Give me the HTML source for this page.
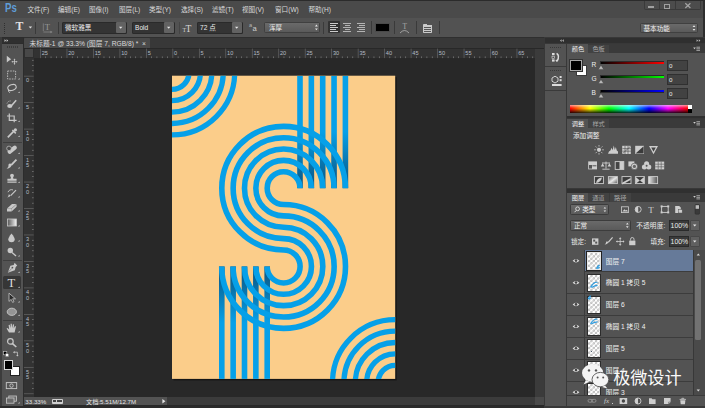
<!DOCTYPE html><html><head><meta charset="utf-8"><title>PS</title><style>
html,body{margin:0;padding:0;background:#282828;}
body{width:705px;height:408px;overflow:hidden;position:relative;font-family:"Liberation Sans","Noto Sans CJK SC",sans-serif;font-size:6.3px;color:#d8d8d8;line-height:1;}
.a{position:absolute;}
.t{position:absolute;white-space:nowrap;}
svg{position:absolute;left:0;top:0;overflow:visible}

</style></head><body>
<div class="a" style="left:0px;top:0px;width:705px;height:1px;background:#2b2b2b;"></div>
<div class="a" style="left:0px;top:1px;width:705px;height:16.5px;background:#4a4a4a;"></div>
<div class="a" style="left:0px;top:17.5px;width:705px;height:0.8px;background:#5c5c5c;"></div>
<div class="a" style="left:0px;top:18.3px;width:705px;height:18.5px;background:#525252;"></div>
<div class="a" style="left:0px;top:36.8px;width:705px;height:11.7px;background:#383838;"></div>
<div class="a" style="left:0px;top:36.8px;width:705px;height:0.9px;background:#2f2f2f;"></div>
<div class="a" style="left:0px;top:48.5px;width:705px;height:360px;background:#282828;"></div>
<div class="t" style="left:5px;top:2.3px;font-size:12.4px;color:#5f9dd8;font-weight:bold;transform:scaleX(0.78);transform-origin:0 0;">Ps</div>
<div class="t" style="left:27.5px;top:6.7px;font-size:6.6px;color:#dadada;">文件(F)</div>
<div class="t" style="left:58px;top:6.7px;font-size:6.6px;color:#dadada;">编辑(E)</div>
<div class="t" style="left:89px;top:6.7px;font-size:6.6px;color:#dadada;">图像(I)</div>
<div class="t" style="left:119px;top:6.7px;font-size:6.6px;color:#dadada;">图层(L)</div>
<div class="t" style="left:149px;top:6.7px;font-size:6.6px;color:#dadada;">类型(Y)</div>
<div class="t" style="left:181px;top:6.7px;font-size:6.6px;color:#dadada;">选择(S)</div>
<div class="t" style="left:212px;top:6.7px;font-size:6.6px;color:#dadada;">滤镜(T)</div>
<div class="t" style="left:242px;top:6.7px;font-size:6.6px;color:#dadada;">视图(V)</div>
<div class="t" style="left:275px;top:6.7px;font-size:6.6px;color:#dadada;">窗口(W)</div>
<div class="t" style="left:308.5px;top:6.7px;font-size:6.6px;color:#dadada;">帮助(H)</div>
<div class="a" style="left:643.7px;top:0px;width:57px;height:10.4px;background:#4c4c4c;border:0.7px solid #3a3a3a;border-top:none;box-sizing:border-box;border-radius:0 0 2px 2px;"></div>
<div class="a" style="left:659px;top:0.5px;width:0.7px;height:9.6px;background:#3a3a3a;"></div>
<div class="a" style="left:674.6px;top:0.5px;width:0.7px;height:9.6px;background:#3a3a3a;"></div>
<div class="a" style="left:648.4px;top:6.3px;width:5.6px;height:1.7px;background:#a0a0a0;"></div>
<div class="a" style="left:664.2px;top:4.3px;width:5.6px;height:4.3px;background:transparent;border:1px solid #a0a0a0;box-sizing:border-box;"></div>
<svg width="705" height="408"><path d="M685.3 3.3 L690.4 8 M690.4 3.3 L685.3 8" stroke="#a4a4a4" stroke-width="1.2" fill="none"/></svg>
<div class="a" style="left:703.4px;top:0px;width:1.6px;height:408px;background:#2e2e2e;"></div>
<div class="a" style="left:0px;top:0px;width:705px;height:0.9px;background:#2b2b2b;"></div>
<div class="a" style="left:4.2px;top:22.6px;width:1.1px;height:1.1px;background:#303030;"></div>
<div class="a" style="left:4.2px;top:24.6px;width:1.1px;height:1.1px;background:#303030;"></div>
<div class="a" style="left:4.2px;top:26.6px;width:1.1px;height:1.1px;background:#303030;"></div>
<div class="a" style="left:4.2px;top:28.6px;width:1.1px;height:1.1px;background:#303030;"></div>
<div class="a" style="left:4.2px;top:30.6px;width:1.1px;height:1.1px;background:#303030;"></div>
<div class="a" style="left:4.2px;top:32.6px;width:1.1px;height:1.1px;background:#303030;"></div>
<div class="t" style="left:15.4px;top:21.3px;font-size:11.8px;color:#e2e2e2;font-family:'Liberation Serif',serif;font-weight:bold;">T</div>
<svg width="705" height="408"><path d="M28.7 26.6 h3.4 l-1.7 2z" fill="#e0e0e0"/></svg>
<div class="a" style="left:35px;top:21.5px;width:0.7px;height:12.5px;background:#3a3a3a;"></div>
<div class="t" style="left:44.8px;top:22.8px;font-size:8.5px;color:#9a9a9a;font-family:'Liberation Serif',serif;">T</div>
<svg width="705" height="408"><path d="M43.3 23.4 v7.6 M43.3 32 h8" stroke="#8c8c8c" stroke-width="0.7" fill="none"/><path d="M50.5 30.8 l2 1.2 l-2 1.2z" fill="#8c8c8c"/></svg>
<div class="a" style="left:58.4px;top:21.5px;width:0.7px;height:12.5px;background:#3a3a3a;"></div>
<div class="a" style="left:62px;top:21.5px;width:64.5px;height:12px;background:#343434;border:0.6px solid #2a2a2a;box-sizing:border-box;border-radius:1px;"></div>
<div class="a" style="left:115.5px;top:22.1px;width:10.4px;height:10.8px;background:#626262;border-radius:1px;"></div>
<svg width="705" height="408"><path d="M119.0 26.7 h3.4 l-1.7 2z" fill="#e8e8e8"/></svg>
<div class="t" style="left:65px;top:24.65px;font-size:6.6px;color:#ececec;">微软雅黑</div>
<div class="a" style="left:132px;top:21.5px;width:42.5px;height:12px;background:#343434;border:0.6px solid #2a2a2a;box-sizing:border-box;border-radius:1px;"></div>
<div class="a" style="left:163.5px;top:22.1px;width:10.4px;height:10.8px;background:#626262;border-radius:1px;"></div>
<svg width="705" height="408"><path d="M167.0 26.7 h3.4 l-1.7 2z" fill="#e8e8e8"/></svg>
<div class="t" style="left:135px;top:24.65px;font-size:6.6px;color:#ececec;">Bold</div>
<div class="t" style="left:182.6px;top:27.2px;font-size:6px;color:#d4d4d4;font-family:'Liberation Serif',serif;">T</div>
<div class="t" style="left:185.6px;top:23.6px;font-size:9.6px;color:#d4d4d4;font-family:'Liberation Serif',serif;">T</div>
<div class="a" style="left:197px;top:21.5px;width:45.5px;height:12px;background:#343434;border:0.6px solid #2a2a2a;box-sizing:border-box;border-radius:1px;"></div>
<div class="a" style="left:231.5px;top:22.1px;width:10.4px;height:10.8px;background:#626262;border-radius:1px;"></div>
<svg width="705" height="408"><path d="M235.0 26.7 h3.4 l-1.7 2z" fill="#e8e8e8"/></svg>
<div class="t" style="left:200px;top:24.65px;font-size:6.6px;color:#ececec;">72 点</div>
<div class="t" style="left:249px;top:23.2px;font-size:5.6px;color:#b8b8b8;">a</div>
<div class="t" style="left:252.6px;top:24.6px;font-size:7.6px;color:#d0d0d0;">a</div>
<div class="a" style="left:264px;top:21.8px;width:55.8px;height:11.4px;background:linear-gradient(#6a6a6a,#5a5a5a);border:0.5px solid #404040;box-sizing:border-box;border-radius:1.5px;"></div>
<div class="t" style="left:269px;top:24.9px;font-size:6.6px;color:#f0f0f0;">浑厚</div>
<svg width="705" height="408"><path d="M315 26.4 l1.4 -1.8 l1.4 1.8z M315 28.4 l1.4 1.8 l1.4 -1.8z" fill="#e8e8e8"/></svg>
<div class="a" style="left:323.4px;top:21.5px;width:0.7px;height:12.5px;background:#3a3a3a;"></div>
<div class="a" style="left:178.5px;top:21.5px;width:0.7px;height:12.5px;background:#444;"></div>
<div class="a" style="left:328px;top:21.3px;width:11.8px;height:12px;background:#333;border-radius:1px;"></div>
<div class="a" style="left:330px;top:23.0px;width:8px;height:0.9px;background:#cccccc;"></div>
<div class="a" style="left:330px;top:25.05px;width:5.5px;height:0.9px;background:#cccccc;"></div>
<div class="a" style="left:330px;top:27.1px;width:8px;height:0.9px;background:#cccccc;"></div>
<div class="a" style="left:330px;top:29.15px;width:5.5px;height:0.9px;background:#cccccc;"></div>
<div class="a" style="left:330px;top:31.2px;width:8px;height:0.9px;background:#cccccc;"></div>
<div class="a" style="left:343.4px;top:23.0px;width:8px;height:0.9px;background:#b4b4b4;"></div>
<div class="a" style="left:344.65px;top:25.05px;width:5.5px;height:0.9px;background:#b4b4b4;"></div>
<div class="a" style="left:343.4px;top:27.1px;width:8px;height:0.9px;background:#b4b4b4;"></div>
<div class="a" style="left:344.65px;top:29.15px;width:5.5px;height:0.9px;background:#b4b4b4;"></div>
<div class="a" style="left:343.4px;top:31.2px;width:8px;height:0.9px;background:#b4b4b4;"></div>
<div class="a" style="left:356.8px;top:23.0px;width:8px;height:0.9px;background:#b4b4b4;"></div>
<div class="a" style="left:359.3px;top:25.05px;width:5.5px;height:0.9px;background:#b4b4b4;"></div>
<div class="a" style="left:356.8px;top:27.1px;width:8px;height:0.9px;background:#b4b4b4;"></div>
<div class="a" style="left:359.3px;top:29.15px;width:5.5px;height:0.9px;background:#b4b4b4;"></div>
<div class="a" style="left:356.8px;top:31.2px;width:8px;height:0.9px;background:#b4b4b4;"></div>
<div class="a" style="left:371px;top:21px;width:0.7px;height:12.5px;background:#3a3a3a;"></div>
<div class="a" style="left:375px;top:23px;width:14.6px;height:9.2px;background:#000;border:0.5px solid #4a4a4a;box-sizing:border-box;"></div>
<div class="a" style="left:393.5px;top:21px;width:0.7px;height:12.5px;background:#3a3a3a;"></div>
<div class="t" style="left:402.4px;top:23.2px;font-size:7.4px;color:#a8a8a8;font-family:'Liberation Serif',serif;">T</div>
<svg width="705" height="408"><path d="M400 33 q4.5 -5 9 0" stroke="#a8a8a8" stroke-width="0.9" fill="none"/></svg>
<div class="a" style="left:416px;top:21px;width:0.7px;height:12.5px;background:#3a3a3a;"></div>
<div class="a" style="left:422.8px;top:23.6px;width:9.6px;height:9px;background:#cacaca;border-radius:0.8px;"></div>
<div class="a" style="left:427.4px;top:23.6px;width:5px;height:1.8px;background:#525252;"></div>
<div class="a" style="left:424px;top:27px;width:7px;height:1px;background:#555;"></div>
<div class="a" style="left:424px;top:29px;width:7px;height:1px;background:#555;"></div>
<div class="a" style="left:424px;top:30.8px;width:7px;height:0.8px;background:#555;"></div>
<div class="a" style="left:439.3px;top:21px;width:0.7px;height:12.5px;background:#3a3a3a;"></div>
<div class="a" style="left:639.8px;top:22.8px;width:58.4px;height:10.6px;background:linear-gradient(#6a6a6a,#5a5a5a);border:0.5px solid #404040;box-sizing:border-box;border-radius:1.5px;"></div>
<div class="t" style="left:643.5px;top:25.6px;font-size:6.6px;color:#f0f0f0;">基本功能</div>
<svg width="705" height="408"><path d="M692.6 27 l1.4 -1.8 l1.4 1.8z M692.6 29 l1.4 1.8 l1.4 -1.8z" fill="#e8e8e8"/></svg>
<div class="a" style="left:0px;top:36.8px;width:24.3px;height:372px;background:#2c2c2c;"></div>
<div class="a" style="left:0px;top:36.8px;width:1.8px;height:372px;background:#3c3c3c;"></div>
<div class="a" style="left:1.8px;top:37.6px;width:20.8px;height:5.8px;background:#2f2f2f;"></div>
<svg width="705" height="408"><path d="M4.5 39.3 l1.6 1.3 l-1.6 1.3z M6.6 39.3 l1.6 1.3 l-1.6 1.3z" fill="#cfcfcf"/></svg>
<div class="a" style="left:1.8px;top:43.6px;width:20.8px;height:364.4px;background:#535353;"></div>
<div class="a" style="left:6.6px;top:46.4px;width:1.4px;height:1.2px;background:#3c3c3c;"></div>
<div class="a" style="left:8.6px;top:46.4px;width:1.4px;height:1.2px;background:#3c3c3c;"></div>
<div class="a" style="left:10.6px;top:46.4px;width:1.4px;height:1.2px;background:#3c3c3c;"></div>
<div class="a" style="left:12.6px;top:46.4px;width:1.4px;height:1.2px;background:#3c3c3c;"></div>
<div class="a" style="left:14.6px;top:46.4px;width:1.4px;height:1.2px;background:#3c3c3c;"></div>
<div class="a" style="left:16.6px;top:46.4px;width:1.4px;height:1.2px;background:#3c3c3c;"></div>
<div class="a" style="left:3px;top:142.3px;width:18.5px;height:0.7px;background:#3e3e3e;"></div>
<div class="a" style="left:3px;top:259.5px;width:18.5px;height:0.7px;background:#3e3e3e;"></div>
<div class="a" style="left:3px;top:320px;width:18.5px;height:0.7px;background:#3e3e3e;"></div>
<div class="a" style="left:3px;top:276px;width:17.6px;height:13.4px;background:#363636;border-radius:1.5px;"></div>
<svg width="705" height="408" fill="none" stroke="none"><path d="M6.8 55.8 v6.8 l1.8-1.6 l2.6-1.8z" fill="#c8c8c8"/><path d="M14.5 59.2 v5 M12 61.7 h5" stroke="#c8c8c8" stroke-width="0.8"/><path d="M14.5 58.6 l1 1.2 h-2z M14.5 64.8 l1 -1.2 h-2z M11.4 61.7 l1.2 -1 v2z M17.6 61.7 l-1.2 -1 v2z" fill="#c8c8c8"/><rect x="7.6" y="71" width="8" height="8" stroke="#b4b4b4" stroke-width="1" stroke-dasharray="1.6 1"/><ellipse cx="12" cy="87.5" rx="4.3" ry="2.8" stroke="#c8c8c8" stroke-width="1.1" transform="rotate(-18 12 87.5)"/><path d="M8.5 89.5 q-0.5 2 1.2 3.2" stroke="#c8c8c8" stroke-width="1"/><path d="M16.2 100.3 l-5 5.6" stroke="#c8c8c8" stroke-width="1.5"/><ellipse cx="9.8" cy="106" rx="2.6" ry="2" fill="#c8c8c8"/><path d="M7 103.5 a3.5 3.5 0 0 1 4-2.5" stroke="#c8c8c8" stroke-width="0.8" stroke-dasharray="1 0.8"/><path d="M9.3 113.6 v6.8 h7.3 M7 116 h7.2 v6.2" stroke="#c8c8c8" stroke-width="1.2"/><path d="M14 131 l-5 5.2 l-1.2 1.2" stroke="#c8c8c8" stroke-width="1.7"/><path d="M12.4 130 l3.4 3.4" stroke="#c8c8c8" stroke-width="1.5"/><circle cx="15.4" cy="129.8" r="1.6" fill="#c8c8c8"/><rect x="6.9" y="147.6" width="10.6" height="4.2" rx="2" fill="#c8c8c8" transform="rotate(-38 12.2 149.7)"/><circle cx="9" cy="148.4" r="2.3" fill="#4a4a4a" stroke="#c8c8c8" stroke-width="0.7"/><path d="M16.4 159.6 l-5.2 5.6" stroke="#c8c8c8" stroke-width="1.8"/><path d="M11.6 164.6 q0 3.6 -5 4.2 q2.4 -1.6 2 -4.6 q1.6 -1.4 3 0.4z" fill="#c8c8c8"/><circle cx="12" cy="175.6" r="1.9" fill="#c8c8c8"/><path d="M11.1 176.6 h1.8 l0.5 2.2 h3.2 v2 h-9.2 v-2 h3.2z M7.4 181.6 h9.2 v1.2 h-9.2z" fill="#c8c8c8"/><path d="M16 190.2 l-5.3 5.4" stroke="#c8c8c8" stroke-width="1.2"/><path d="M10.6 195 q-0.4 2.4 -3.4 2.6 q1.8 -1 1.4 -3z" fill="#c8c8c8"/><path d="M8 192.2 a3.6 3.6 0 0 1 5-2.2" stroke="#c8c8c8" stroke-width="0.9"/><path d="M7 208.6 l5 -4.6 h4.4 l-5 4.6z M7 208.8 h4.4 v2.6 h-4.4z M11.6 208.8 l5 -4.6 v2.6 l-5 4.6z" fill="#c8c8c8"/><defs><linearGradient id="tg" x1="0" x2="1"><stop offset="0" stop-color="#555"/><stop offset="1" stop-color="#f2f2f2"/></linearGradient></defs><rect x="7.4" y="219" width="9" height="7" fill="url(#tg)" stroke="#c8c8c8" stroke-width="0.8"/><path d="M11.5 233.6 q3.2 4 3.2 5.6 a3.2 3 0 0 1 -6.4 0 q0 -1.6 3.2 -5.6z" fill="#c8c8c8"/><circle cx="10.3" cy="250.5" r="2.7" fill="#c8c8c8"/><path d="M12 252.4 l4 3.6" stroke="#c8c8c8" stroke-width="1.3"/><path d="M14.6 262.8 l2.6 2.6 l-1.5 1.5 l-0.9 3.3 l-7 2.6 l2.6 -7 l3.3 -0.9z" fill="#c8c8c8"/><circle cx="12.4" cy="267.6" r="0.9" fill="#535353"/><path d="M8 272.4 l3.8 -4" stroke="#535353" stroke-width="0.5"/><path d="M9 293.2 v8.2 l2.2 -2 l1.4 3 l1.4 -0.7 l-1.4 -2.9 h2.9z" fill="#2a2a2a" stroke="#c8c8c8" stroke-width="0.8"/><ellipse cx="11.8" cy="311.8" rx="4.6" ry="3.6" fill="#959595" stroke="#c8c8c8" stroke-width="0.9"/><path d="M9 332.6 l-2.4 -4 l1 -0.7 l1.6 1.6 l-0.6 -4.6 l1.1 -0.2 l0.9 3.4 l0 -4.4 h1.2 l0.3 4.3 l0.9 -3.8 l1.1 0.2 l-0.4 4.2 l1.3 -2.6 l1 0.4 l-1.4 6.2z" fill="#c8c8c8"/><circle cx="10.4" cy="341.4" r="2.8" stroke="#c8c8c8" stroke-width="1.2"/><path d="M12.5 343.6 l3.8 3.4" stroke="#c8c8c8" stroke-width="1.6"/><rect x="3.4" y="351.4" width="3.4" height="3.4" fill="#000" stroke="#c8c8c8" stroke-width="0.6"/><rect x="5.4" y="353.4" width="3.4" height="3.4" fill="#fff" stroke="#222" stroke-width="0.4"/><path d="M14 352.2 h3.4 v3.4" stroke="#c8c8c8" stroke-width="0.8"/><path d="M14.6 351 l-1.6 1.2 l1.6 1.2z M16.2 355 l1.2 1.6 l1.2 -1.6z" fill="#c8c8c8"/><rect x="6.3" y="382.6" width="10.4" height="6" stroke="#c8c8c8" stroke-width="0.9"/><circle cx="11.5" cy="385.6" r="1.7" stroke="#c8c8c8" stroke-width="0.9"/><rect x="8.8" y="396" width="7.6" height="5.2" fill="#6a6a6a" stroke="#c8c8c8" stroke-width="0.8"/><rect x="6.4" y="398" width="7.6" height="5.2" fill="#6a6a6a" stroke="#c8c8c8" stroke-width="0.8"/><path d="M19.6 77.9 v1.6 h-1.6z" fill="#cfcfcf"/><path d="M19.6 91.4 v1.6 h-1.6z" fill="#cfcfcf"/><path d="M19.6 106.9 v1.6 h-1.6z" fill="#cfcfcf"/><path d="M19.6 120.4 v1.6 h-1.6z" fill="#cfcfcf"/><path d="M19.6 135.4 v1.6 h-1.6z" fill="#cfcfcf"/><path d="M19.6 152.4 v1.6 h-1.6z" fill="#cfcfcf"/><path d="M19.6 166.9 v1.6 h-1.6z" fill="#cfcfcf"/><path d="M19.6 181.4 v1.6 h-1.6z" fill="#cfcfcf"/><path d="M19.6 195.9 v1.6 h-1.6z" fill="#cfcfcf"/><path d="M19.6 209.9 v1.6 h-1.6z" fill="#cfcfcf"/><path d="M19.6 224.9 v1.6 h-1.6z" fill="#cfcfcf"/><path d="M19.6 239.9 v1.6 h-1.6z" fill="#cfcfcf"/><path d="M19.6 254.9 v1.6 h-1.6z" fill="#cfcfcf"/><path d="M19.6 271.4 v1.6 h-1.6z" fill="#cfcfcf"/><path d="M19.6 286.4 v1.6 h-1.6z" fill="#cfcfcf"/><path d="M19.6 300.9 v1.6 h-1.6z" fill="#cfcfcf"/><path d="M19.6 314.4 v1.6 h-1.6z" fill="#cfcfcf"/><path d="M19.6 330.9 v1.6 h-1.6z" fill="#cfcfcf"/><path d="M19.6 401.9 v1.6 h-1.6z" fill="#cfcfcf"/></svg>
<div class="t" style="left:7.4px;top:276.6px;font-size:12.6px;color:#dedede;font-family:'Liberation Serif',serif;">T</div>
<div class="a" style="left:9.8px;top:366.4px;width:9.8px;height:9.8px;background:#fff;border:0.5px solid #222;box-sizing:border-box;"></div>
<div class="a" style="left:3.7px;top:360.3px;width:9.8px;height:9.6px;background:#000;border:0.6px solid #d8d8d8;box-sizing:border-box;"></div>
<div class="a" style="left:24.2px;top:38px;width:126px;height:10.4px;background:#4a4a4a;border-radius:1px 1px 0 0;"></div>
<div class="t" style="left:29.6px;top:40.6px;font-size:6.68px;color:#dadada;">未标题-1 @ 33.3% (图层 7, RGB/8) * &nbsp;×</div>
<div class="a" style="left:24px;top:48.5px;width:511px;height:9.6px;background:#323232;"></div>
<div class="a" style="left:24px;top:58.1px;width:9.7px;height:339.1px;background:#323232;"></div>
<div class="a" style="left:24px;top:48.5px;width:9.7px;height:9.6px;background:#2e2e2e;"></div>
<div class="a" style="left:24.5px;top:49.3px;width:8.4px;height:8px;background:#484848;"></div>
<svg width="705" height="408"><rect x="40.15" y="48.6" width="0.7" height="9.5" fill="#666"/><rect x="45.44" y="56.4" width="0.6" height="1.7" fill="#8a8a8a"/><rect x="50.74" y="56.4" width="0.6" height="1.7" fill="#8a8a8a"/><rect x="56.03" y="56.4" width="0.6" height="1.7" fill="#8a8a8a"/><rect x="61.33" y="56.4" width="0.6" height="1.7" fill="#8a8a8a"/><rect x="66.62" y="48.6" width="0.7" height="9.5" fill="#666"/><rect x="71.91" y="56.4" width="0.6" height="1.7" fill="#8a8a8a"/><rect x="77.21" y="56.4" width="0.6" height="1.7" fill="#8a8a8a"/><rect x="82.50" y="56.4" width="0.6" height="1.7" fill="#8a8a8a"/><rect x="87.80" y="56.4" width="0.6" height="1.7" fill="#8a8a8a"/><rect x="93.09" y="48.6" width="0.7" height="9.5" fill="#666"/><rect x="98.38" y="56.4" width="0.6" height="1.7" fill="#8a8a8a"/><rect x="103.68" y="56.4" width="0.6" height="1.7" fill="#8a8a8a"/><rect x="108.97" y="56.4" width="0.6" height="1.7" fill="#8a8a8a"/><rect x="114.27" y="56.4" width="0.6" height="1.7" fill="#8a8a8a"/><rect x="119.56" y="48.6" width="0.7" height="9.5" fill="#666"/><rect x="124.85" y="56.4" width="0.6" height="1.7" fill="#8a8a8a"/><rect x="130.15" y="56.4" width="0.6" height="1.7" fill="#8a8a8a"/><rect x="135.44" y="56.4" width="0.6" height="1.7" fill="#8a8a8a"/><rect x="140.74" y="56.4" width="0.6" height="1.7" fill="#8a8a8a"/><rect x="146.03" y="48.6" width="0.7" height="9.5" fill="#666"/><rect x="151.32" y="56.4" width="0.6" height="1.7" fill="#8a8a8a"/><rect x="156.62" y="56.4" width="0.6" height="1.7" fill="#8a8a8a"/><rect x="161.91" y="56.4" width="0.6" height="1.7" fill="#8a8a8a"/><rect x="167.21" y="56.4" width="0.6" height="1.7" fill="#8a8a8a"/><rect x="172.50" y="48.6" width="0.7" height="9.5" fill="#666"/><rect x="177.79" y="56.4" width="0.6" height="1.7" fill="#8a8a8a"/><rect x="183.09" y="56.4" width="0.6" height="1.7" fill="#8a8a8a"/><rect x="188.38" y="56.4" width="0.6" height="1.7" fill="#8a8a8a"/><rect x="193.68" y="56.4" width="0.6" height="1.7" fill="#8a8a8a"/><rect x="198.97" y="48.6" width="0.7" height="9.5" fill="#666"/><rect x="204.26" y="56.4" width="0.6" height="1.7" fill="#8a8a8a"/><rect x="209.56" y="56.4" width="0.6" height="1.7" fill="#8a8a8a"/><rect x="214.85" y="56.4" width="0.6" height="1.7" fill="#8a8a8a"/><rect x="220.15" y="56.4" width="0.6" height="1.7" fill="#8a8a8a"/><rect x="225.44" y="48.6" width="0.7" height="9.5" fill="#666"/><rect x="230.73" y="56.4" width="0.6" height="1.7" fill="#8a8a8a"/><rect x="236.03" y="56.4" width="0.6" height="1.7" fill="#8a8a8a"/><rect x="241.32" y="56.4" width="0.6" height="1.7" fill="#8a8a8a"/><rect x="246.62" y="56.4" width="0.6" height="1.7" fill="#8a8a8a"/><rect x="251.91" y="48.6" width="0.7" height="9.5" fill="#666"/><rect x="257.20" y="56.4" width="0.6" height="1.7" fill="#8a8a8a"/><rect x="262.50" y="56.4" width="0.6" height="1.7" fill="#8a8a8a"/><rect x="267.79" y="56.4" width="0.6" height="1.7" fill="#8a8a8a"/><rect x="273.09" y="56.4" width="0.6" height="1.7" fill="#8a8a8a"/><rect x="278.38" y="48.6" width="0.7" height="9.5" fill="#666"/><rect x="283.67" y="56.4" width="0.6" height="1.7" fill="#8a8a8a"/><rect x="288.97" y="56.4" width="0.6" height="1.7" fill="#8a8a8a"/><rect x="294.26" y="56.4" width="0.6" height="1.7" fill="#8a8a8a"/><rect x="299.56" y="56.4" width="0.6" height="1.7" fill="#8a8a8a"/><rect x="304.85" y="48.6" width="0.7" height="9.5" fill="#666"/><rect x="310.14" y="56.4" width="0.6" height="1.7" fill="#8a8a8a"/><rect x="315.44" y="56.4" width="0.6" height="1.7" fill="#8a8a8a"/><rect x="320.73" y="56.4" width="0.6" height="1.7" fill="#8a8a8a"/><rect x="326.03" y="56.4" width="0.6" height="1.7" fill="#8a8a8a"/><rect x="331.32" y="48.6" width="0.7" height="9.5" fill="#666"/><rect x="336.61" y="56.4" width="0.6" height="1.7" fill="#8a8a8a"/><rect x="341.91" y="56.4" width="0.6" height="1.7" fill="#8a8a8a"/><rect x="347.20" y="56.4" width="0.6" height="1.7" fill="#8a8a8a"/><rect x="352.50" y="56.4" width="0.6" height="1.7" fill="#8a8a8a"/><rect x="357.79" y="48.6" width="0.7" height="9.5" fill="#666"/><rect x="363.08" y="56.4" width="0.6" height="1.7" fill="#8a8a8a"/><rect x="368.38" y="56.4" width="0.6" height="1.7" fill="#8a8a8a"/><rect x="373.67" y="56.4" width="0.6" height="1.7" fill="#8a8a8a"/><rect x="378.97" y="56.4" width="0.6" height="1.7" fill="#8a8a8a"/><rect x="384.26" y="48.6" width="0.7" height="9.5" fill="#666"/><rect x="389.55" y="56.4" width="0.6" height="1.7" fill="#8a8a8a"/><rect x="394.85" y="56.4" width="0.6" height="1.7" fill="#8a8a8a"/><rect x="400.14" y="56.4" width="0.6" height="1.7" fill="#8a8a8a"/><rect x="405.44" y="56.4" width="0.6" height="1.7" fill="#8a8a8a"/><rect x="410.73" y="48.6" width="0.7" height="9.5" fill="#666"/><rect x="416.02" y="56.4" width="0.6" height="1.7" fill="#8a8a8a"/><rect x="421.32" y="56.4" width="0.6" height="1.7" fill="#8a8a8a"/><rect x="426.61" y="56.4" width="0.6" height="1.7" fill="#8a8a8a"/><rect x="431.91" y="56.4" width="0.6" height="1.7" fill="#8a8a8a"/><rect x="437.20" y="48.6" width="0.7" height="9.5" fill="#666"/><rect x="442.49" y="56.4" width="0.6" height="1.7" fill="#8a8a8a"/><rect x="447.79" y="56.4" width="0.6" height="1.7" fill="#8a8a8a"/><rect x="453.08" y="56.4" width="0.6" height="1.7" fill="#8a8a8a"/><rect x="458.38" y="56.4" width="0.6" height="1.7" fill="#8a8a8a"/><rect x="463.67" y="48.6" width="0.7" height="9.5" fill="#666"/><rect x="468.96" y="56.4" width="0.6" height="1.7" fill="#8a8a8a"/><rect x="474.26" y="56.4" width="0.6" height="1.7" fill="#8a8a8a"/><rect x="479.55" y="56.4" width="0.6" height="1.7" fill="#8a8a8a"/><rect x="484.85" y="56.4" width="0.6" height="1.7" fill="#8a8a8a"/><rect x="490.14" y="48.6" width="0.7" height="9.5" fill="#666"/><rect x="495.43" y="56.4" width="0.6" height="1.7" fill="#8a8a8a"/><rect x="500.73" y="56.4" width="0.6" height="1.7" fill="#8a8a8a"/><rect x="506.02" y="56.4" width="0.6" height="1.7" fill="#8a8a8a"/><rect x="511.32" y="56.4" width="0.6" height="1.7" fill="#8a8a8a"/><rect x="516.61" y="48.6" width="0.7" height="9.5" fill="#666"/><rect x="521.90" y="56.4" width="0.6" height="1.7" fill="#8a8a8a"/><rect x="527.20" y="56.4" width="0.6" height="1.7" fill="#8a8a8a"/><rect x="532.49" y="56.4" width="0.6" height="1.7" fill="#8a8a8a"/><rect x="32" y="59.92" width="1.7" height="0.6" fill="#8a8a8a"/><rect x="32" y="65.21" width="1.7" height="0.6" fill="#8a8a8a"/><rect x="32" y="70.51" width="1.7" height="0.6" fill="#8a8a8a"/><rect x="24" y="75.80" width="9.7" height="0.7" fill="#666"/><rect x="32" y="81.09" width="1.7" height="0.6" fill="#8a8a8a"/><rect x="32" y="86.39" width="1.7" height="0.6" fill="#8a8a8a"/><rect x="32" y="91.68" width="1.7" height="0.6" fill="#8a8a8a"/><rect x="32" y="96.98" width="1.7" height="0.6" fill="#8a8a8a"/><rect x="24" y="102.27" width="9.7" height="0.7" fill="#666"/><rect x="32" y="107.56" width="1.7" height="0.6" fill="#8a8a8a"/><rect x="32" y="112.86" width="1.7" height="0.6" fill="#8a8a8a"/><rect x="32" y="118.15" width="1.7" height="0.6" fill="#8a8a8a"/><rect x="32" y="123.45" width="1.7" height="0.6" fill="#8a8a8a"/><rect x="24" y="128.74" width="9.7" height="0.7" fill="#666"/><rect x="32" y="134.03" width="1.7" height="0.6" fill="#8a8a8a"/><rect x="32" y="139.33" width="1.7" height="0.6" fill="#8a8a8a"/><rect x="32" y="144.62" width="1.7" height="0.6" fill="#8a8a8a"/><rect x="32" y="149.92" width="1.7" height="0.6" fill="#8a8a8a"/><rect x="24" y="155.21" width="9.7" height="0.7" fill="#666"/><rect x="32" y="160.50" width="1.7" height="0.6" fill="#8a8a8a"/><rect x="32" y="165.80" width="1.7" height="0.6" fill="#8a8a8a"/><rect x="32" y="171.09" width="1.7" height="0.6" fill="#8a8a8a"/><rect x="32" y="176.39" width="1.7" height="0.6" fill="#8a8a8a"/><rect x="24" y="181.68" width="9.7" height="0.7" fill="#666"/><rect x="32" y="186.97" width="1.7" height="0.6" fill="#8a8a8a"/><rect x="32" y="192.27" width="1.7" height="0.6" fill="#8a8a8a"/><rect x="32" y="197.56" width="1.7" height="0.6" fill="#8a8a8a"/><rect x="32" y="202.86" width="1.7" height="0.6" fill="#8a8a8a"/><rect x="24" y="208.15" width="9.7" height="0.7" fill="#666"/><rect x="32" y="213.44" width="1.7" height="0.6" fill="#8a8a8a"/><rect x="32" y="218.74" width="1.7" height="0.6" fill="#8a8a8a"/><rect x="32" y="224.03" width="1.7" height="0.6" fill="#8a8a8a"/><rect x="32" y="229.33" width="1.7" height="0.6" fill="#8a8a8a"/><rect x="24" y="234.62" width="9.7" height="0.7" fill="#666"/><rect x="32" y="239.91" width="1.7" height="0.6" fill="#8a8a8a"/><rect x="32" y="245.21" width="1.7" height="0.6" fill="#8a8a8a"/><rect x="32" y="250.50" width="1.7" height="0.6" fill="#8a8a8a"/><rect x="32" y="255.80" width="1.7" height="0.6" fill="#8a8a8a"/><rect x="24" y="261.09" width="9.7" height="0.7" fill="#666"/><rect x="32" y="266.38" width="1.7" height="0.6" fill="#8a8a8a"/><rect x="32" y="271.68" width="1.7" height="0.6" fill="#8a8a8a"/><rect x="32" y="276.97" width="1.7" height="0.6" fill="#8a8a8a"/><rect x="32" y="282.27" width="1.7" height="0.6" fill="#8a8a8a"/><rect x="24" y="287.56" width="9.7" height="0.7" fill="#666"/><rect x="32" y="292.85" width="1.7" height="0.6" fill="#8a8a8a"/><rect x="32" y="298.15" width="1.7" height="0.6" fill="#8a8a8a"/><rect x="32" y="303.44" width="1.7" height="0.6" fill="#8a8a8a"/><rect x="32" y="308.74" width="1.7" height="0.6" fill="#8a8a8a"/><rect x="24" y="314.03" width="9.7" height="0.7" fill="#666"/><rect x="32" y="319.32" width="1.7" height="0.6" fill="#8a8a8a"/><rect x="32" y="324.62" width="1.7" height="0.6" fill="#8a8a8a"/><rect x="32" y="329.91" width="1.7" height="0.6" fill="#8a8a8a"/><rect x="32" y="335.21" width="1.7" height="0.6" fill="#8a8a8a"/><rect x="24" y="340.50" width="9.7" height="0.7" fill="#666"/><rect x="32" y="345.79" width="1.7" height="0.6" fill="#8a8a8a"/><rect x="32" y="351.09" width="1.7" height="0.6" fill="#8a8a8a"/><rect x="32" y="356.38" width="1.7" height="0.6" fill="#8a8a8a"/><rect x="32" y="361.68" width="1.7" height="0.6" fill="#8a8a8a"/><rect x="24" y="366.97" width="9.7" height="0.7" fill="#666"/><rect x="32" y="372.26" width="1.7" height="0.6" fill="#8a8a8a"/><rect x="32" y="377.56" width="1.7" height="0.6" fill="#8a8a8a"/><rect x="32" y="382.85" width="1.7" height="0.6" fill="#8a8a8a"/><rect x="32" y="388.15" width="1.7" height="0.6" fill="#8a8a8a"/><rect x="24" y="393.44" width="9.7" height="0.7" fill="#666"/></svg>
<div class="t" style="left:41.75000000000001px;top:50.5px;font-size:5.6px;color:#b4bcc6;">25</div>
<div class="t" style="left:68.22px;top:50.5px;font-size:5.6px;color:#b4bcc6;">20</div>
<div class="t" style="left:94.69px;top:50.5px;font-size:5.6px;color:#b4bcc6;">15</div>
<div class="t" style="left:121.16px;top:50.5px;font-size:5.6px;color:#b4bcc6;">10</div>
<div class="t" style="left:147.63px;top:50.5px;font-size:5.6px;color:#b4bcc6;">5</div>
<div class="t" style="left:174.1px;top:50.5px;font-size:5.6px;color:#b4bcc6;">0</div>
<div class="t" style="left:200.57px;top:50.5px;font-size:5.6px;color:#b4bcc6;">5</div>
<div class="t" style="left:227.04px;top:50.5px;font-size:5.6px;color:#b4bcc6;">10</div>
<div class="t" style="left:253.51px;top:50.5px;font-size:5.6px;color:#b4bcc6;">15</div>
<div class="t" style="left:279.98px;top:50.5px;font-size:5.6px;color:#b4bcc6;">20</div>
<div class="t" style="left:306.45000000000005px;top:50.5px;font-size:5.6px;color:#b4bcc6;">25</div>
<div class="t" style="left:332.92px;top:50.5px;font-size:5.6px;color:#b4bcc6;">30</div>
<div class="t" style="left:359.39px;top:50.5px;font-size:5.6px;color:#b4bcc6;">35</div>
<div class="t" style="left:385.86px;top:50.5px;font-size:5.6px;color:#b4bcc6;">40</div>
<div class="t" style="left:412.33000000000004px;top:50.5px;font-size:5.6px;color:#b4bcc6;">45</div>
<div class="t" style="left:438.8px;top:50.5px;font-size:5.6px;color:#b4bcc6;">50</div>
<div class="t" style="left:465.27px;top:50.5px;font-size:5.6px;color:#b4bcc6;">55</div>
<div class="t" style="left:491.74px;top:50.5px;font-size:5.6px;color:#b4bcc6;">60</div>
<div class="t" style="left:518.2099999999999px;top:50.5px;font-size:5.6px;color:#b4bcc6;">65</div>
<div class="t" style="left:26.1px;top:78.4px;font-size:5.6px;color:#b4bcc6;">0</div>
<div class="t" style="left:26.1px;top:104.87px;font-size:5.6px;color:#b4bcc6;">5</div>
<div class="t" style="left:26.1px;top:131.34px;font-size:5.6px;color:#b4bcc6;">1</div>
<div class="t" style="left:26.1px;top:136.94px;font-size:5.6px;color:#b4bcc6;">0</div>
<div class="t" style="left:26.1px;top:157.81px;font-size:5.6px;color:#b4bcc6;">1</div>
<div class="t" style="left:26.1px;top:163.41px;font-size:5.6px;color:#b4bcc6;">5</div>
<div class="t" style="left:26.1px;top:184.28px;font-size:5.6px;color:#b4bcc6;">2</div>
<div class="t" style="left:26.1px;top:189.88px;font-size:5.6px;color:#b4bcc6;">0</div>
<div class="t" style="left:26.1px;top:210.75px;font-size:5.6px;color:#b4bcc6;">2</div>
<div class="t" style="left:26.1px;top:216.35px;font-size:5.6px;color:#b4bcc6;">5</div>
<div class="t" style="left:26.1px;top:237.22px;font-size:5.6px;color:#b4bcc6;">3</div>
<div class="t" style="left:26.1px;top:242.82px;font-size:5.6px;color:#b4bcc6;">0</div>
<div class="t" style="left:26.1px;top:263.69px;font-size:5.6px;color:#b4bcc6;">3</div>
<div class="t" style="left:26.1px;top:269.29px;font-size:5.6px;color:#b4bcc6;">5</div>
<div class="t" style="left:26.1px;top:290.16px;font-size:5.6px;color:#b4bcc6;">4</div>
<div class="t" style="left:26.1px;top:295.76px;font-size:5.6px;color:#b4bcc6;">0</div>
<div class="t" style="left:26.1px;top:316.63px;font-size:5.6px;color:#b4bcc6;">4</div>
<div class="t" style="left:26.1px;top:322.23px;font-size:5.6px;color:#b4bcc6;">5</div>
<div class="t" style="left:26.1px;top:343.1px;font-size:5.6px;color:#b4bcc6;">5</div>
<div class="t" style="left:26.1px;top:348.7px;font-size:5.6px;color:#b4bcc6;">0</div>
<div class="t" style="left:26.1px;top:369.57px;font-size:5.6px;color:#b4bcc6;">5</div>
<div class="t" style="left:26.1px;top:375.17px;font-size:5.6px;color:#b4bcc6;">5</div>
<div class="a" style="left:534.6px;top:48.5px;width:9.2px;height:348.5px;background:#3b3b3b;"></div>
<div class="a" style="left:167.4px;top:396.8px;width:367.2px;height:8.2px;background:#3b3b3b;"></div>
<div class="a" style="left:534.6px;top:396.8px;width:9.2px;height:8.2px;background:#4a4a4a;"></div>
<div class="a" style="left:24px;top:396.8px;width:143.4px;height:8.7px;background:#535353;"></div>
<div class="a" style="left:0px;top:405.5px;width:705px;height:2.5px;background:#2a2a2a;"></div>
<div class="t" style="left:25.3px;top:398.9px;font-size:6.2px;color:#e4e4e4;">33.33%</div>
<div class="a" style="left:52px;top:398.6px;width:11px;height:5px;background:#d0d0d0;border-radius:1px;"></div>
<div class="a" style="left:53.2px;top:399.8px;width:3px;height:2.6px;background:#444;"></div>
<div class="a" style="left:57.4px;top:399.8px;width:4.4px;height:2.6px;background:#444;"></div>
<div class="t" style="left:86px;top:398.8px;font-size:6.2px;color:#e4e4e4;">文档:5.51M/12.7M</div>
<svg width="705" height="408"><path d="M162.4 399 l3 2.2 l-3 2.2z" fill="#e6e6e6"/></svg>
<svg width="705" height="408"><defs><clipPath id="cv"><rect x="172.0" y="75.7" width="223.2" height="303.2"/></clipPath><linearGradient id="g1" gradientUnits="userSpaceOnUse" x1="0" y1="75.7" x2="0" y2="188.14999999999998"><stop offset="0" stop-color="#06a0e8"/><stop offset="0.5" stop-color="#06a0e8"/><stop offset="1" stop-color="#0b527e"/></linearGradient><linearGradient id="g2" gradientUnits="userSpaceOnUse" x1="0" y1="378.9" x2="0" y2="266.45"><stop offset="0" stop-color="#06a0e8"/><stop offset="0.5" stop-color="#06a0e8"/><stop offset="1" stop-color="#0b527e"/></linearGradient></defs><rect x="173.5" y="77.2" width="223.2" height="303.2" fill="#161616"/><rect x="172.0" y="75.7" width="223.2" height="303.2" fill="#fbcd8a"/><g clip-path="url(#cv)" fill="none"><circle cx="172.0" cy="72.2" r="17.10" stroke="#06a0e8" stroke-width="5.3"/><circle cx="395.2" cy="382.4" r="17.10" stroke="#06a0e8" stroke-width="5.3"/><circle cx="172.0" cy="72.2" r="28.50" stroke="#06a0e8" stroke-width="5.3"/><circle cx="395.2" cy="382.4" r="28.50" stroke="#06a0e8" stroke-width="5.3"/><circle cx="172.0" cy="72.2" r="39.90" stroke="#06a0e8" stroke-width="5.3"/><circle cx="395.2" cy="382.4" r="39.90" stroke="#06a0e8" stroke-width="5.3"/><circle cx="172.0" cy="72.2" r="51.30" stroke="#06a0e8" stroke-width="5.3"/><circle cx="395.2" cy="382.4" r="51.30" stroke="#06a0e8" stroke-width="5.3"/><circle cx="172.0" cy="72.2" r="62.70" stroke="#06a0e8" stroke-width="5.3"/><circle cx="395.2" cy="382.4" r="62.70" stroke="#06a0e8" stroke-width="5.3"/><rect x="297.20" y="75.7" width="5.6" height="112.45" fill="url(#g1)"/><rect x="264.40" y="266.45" width="5.6" height="112.45" fill="url(#g2)"/><rect x="308.55" y="75.7" width="5.6" height="112.45" fill="url(#g1)"/><rect x="253.05" y="266.45" width="5.6" height="112.45" fill="url(#g2)"/><rect x="319.90" y="75.7" width="5.6" height="112.45" fill="url(#g1)"/><rect x="241.70" y="266.45" width="5.6" height="112.45" fill="url(#g2)"/><rect x="331.25" y="75.7" width="5.6" height="112.45" fill="url(#g1)"/><rect x="230.35" y="266.45" width="5.6" height="112.45" fill="url(#g2)"/><rect x="342.60" y="75.7" width="5.6" height="112.45" fill="url(#g1)"/><rect x="219.00" y="266.45" width="5.6" height="112.45" fill="url(#g2)"/><path d="M300.00 188.15 A16.40 16.40 0 1 0 283.60 204.55 A61.90 61.90 0 1 1 221.70 266.45" stroke="#06a0e8" stroke-width="5.6"/><path d="M311.35 188.15 A27.75 27.75 0 1 0 283.60 215.90 A50.55 50.55 0 1 1 233.05 266.45" stroke="#06a0e8" stroke-width="5.6"/><path d="M322.70 188.15 A39.10 39.10 0 1 0 283.60 227.25 A39.20 39.20 0 1 1 244.40 266.45" stroke="#06a0e8" stroke-width="5.6"/><path d="M334.05 188.15 A50.45 50.45 0 1 0 283.60 238.60 A27.85 27.85 0 1 1 255.75 266.45" stroke="#06a0e8" stroke-width="5.6"/><path d="M345.40 188.15 A61.80 61.80 0 1 0 283.60 249.95 A16.50 16.50 0 1 1 267.10 266.45" stroke="#06a0e8" stroke-width="5.6"/></g></svg>
<div class="a" style="left:543.8px;top:36.8px;width:161.2px;height:371.2px;background:#383838;"></div>
<div class="a" style="left:545.2px;top:37.6px;width:159.8px;height:5.8px;background:#2f2f2f;"></div>
<svg width="705" height="408"><path d="M561.6 39.3 l-1.6 1.3 l1.6 1.3z M563.8 39.3 l-1.6 1.3 l1.6 1.3z M696.6 39.3 l1.6 1.3 l-1.6 1.3z M698.8 39.3 l1.6 1.3 l-1.6 1.3z" fill="#b4b4b4"/></svg>
<div class="a" style="left:545.2px;top:43.6px;width:20.6px;height:362px;background:#535353;"></div>
<div class="a" style="left:550px;top:46.7px;width:1.4px;height:1.2px;background:#383838;"></div>
<div class="a" style="left:552px;top:46.7px;width:1.4px;height:1.2px;background:#383838;"></div>
<div class="a" style="left:554px;top:46.7px;width:1.4px;height:1.2px;background:#383838;"></div>
<div class="a" style="left:556px;top:46.7px;width:1.4px;height:1.2px;background:#383838;"></div>
<div class="a" style="left:558px;top:46.7px;width:1.4px;height:1.2px;background:#383838;"></div>
<div class="a" style="left:560px;top:46.7px;width:1.4px;height:1.2px;background:#383838;"></div>
<div class="a" style="left:550px;top:70.0px;width:1.4px;height:1.2px;background:#383838;"></div>
<div class="a" style="left:552px;top:70.0px;width:1.4px;height:1.2px;background:#383838;"></div>
<div class="a" style="left:554px;top:70.0px;width:1.4px;height:1.2px;background:#383838;"></div>
<div class="a" style="left:556px;top:70.0px;width:1.4px;height:1.2px;background:#383838;"></div>
<div class="a" style="left:558px;top:70.0px;width:1.4px;height:1.2px;background:#383838;"></div>
<div class="a" style="left:560px;top:70.0px;width:1.4px;height:1.2px;background:#383838;"></div>
<div class="a" style="left:545.2px;top:66px;width:20.6px;height:0.8px;background:#3a3a3a;"></div>
<div class="a" style="left:545.2px;top:90px;width:20.6px;height:0.8px;background:#3a3a3a;"></div>
<svg width="705" height="408" fill="none"><rect x="552" y="53" width="2.6" height="2.2" fill="#dcdcdc"/><rect x="552" y="56.2" width="2.6" height="2.2" stroke="#dcdcdc" stroke-width="0.6"/><rect x="552" y="59.4" width="2.6" height="2.2" fill="#dcdcdc"/><path d="M556.6 53.4 q3.6 2.4 0.4 8" stroke="#dcdcdc" stroke-width="1.5"/><path d="M555.4 60 l2.6 -0.4 l-1.4 2.4z" fill="#dcdcdc"/><path d="M552 78 l3 -1.8 l3 1.8 v3.2 l-3 1.8 l-3 -1.8z" stroke="#dcdcdc" stroke-width="0.9"/><rect x="559.6" y="76" width="2" height="2" fill="#dcdcdc"/><rect x="559.6" y="79.2" width="2" height="2" fill="#dcdcdc"/><rect x="552" y="84" width="9.6" height="2" fill="#dcdcdc"/></svg>
<div class="a" style="left:567.4px;top:44px;width:137.6px;height:9.4px;background:#3a3a3a;"></div>
<div class="a" style="left:567.4px;top:44px;width:20.4px;height:9.6px;background:#535353;"></div>
<div class="t" style="left:571.8px;top:46.2px;font-size:6.2px;color:#f0f0f0;">颜色</div>
<div class="a" style="left:588.4px;top:44.5px;width:20.599999999999998px;height:8.9px;background:#424242;"></div>
<div class="t" style="left:592.4px;top:46.2px;font-size:6.2px;color:#a8a8a8;">色板</div>
<div class="a" style="left:567.4px;top:53.4px;width:137.6px;height:62.199999999999996px;background:#535353;"></div>
<svg width="705" height="408"><path d="M693.2 47.6 h2.6 l-1.3 1.6z" fill="#d0d0d0"/><path d="M696.4 47.2 h3.6 M696.4 48.8 h3.6 M696.4 50.4 h3.6" stroke="#d0d0d0" stroke-width="0.7"/></svg>
<div class="a" style="left:576.4px;top:65.4px;width:10.6px;height:11px;background:#fff;border:0.5px solid #3a3a3a;box-sizing:border-box;"></div>
<div class="a" style="left:570.2px;top:59.6px;width:11.4px;height:11.4px;background:#000;border:0.8px solid #a8a8a8;box-sizing:border-box;outline:0.5px solid #333;"></div>
<div class="t" style="left:591.6px;top:62.0px;font-size:6.6px;color:#ececec;">R</div>
<div class="a" style="left:600.2px;top:61.1px;width:64px;height:3.2px;background:#2c2c2c;"></div>
<div class="a" style="left:600.7px;top:61.6px;width:63px;height:2.2px;background:linear-gradient(90deg,#000,#f00);"></div>
<svg width="705" height="408"><path d="M601 65.2 l2.7 4.2 h-5.4z" fill="#b8b8b8" stroke="#3a3a3a" stroke-width="0.4"/></svg>
<div class="a" style="left:667px;top:59.9px;width:20.8px;height:11px;background:#424242;border:0.6px solid #303030;box-sizing:border-box;"></div>
<div class="t" style="left:669px;top:62.8px;font-size:6.2px;color:#ececec;">0</div>
<div class="t" style="left:591.6px;top:76.2px;font-size:6.6px;color:#ececec;">G</div>
<div class="a" style="left:600.2px;top:75.3px;width:64px;height:3.2px;background:#2c2c2c;"></div>
<div class="a" style="left:600.7px;top:75.8px;width:63px;height:2.2px;background:linear-gradient(90deg,#000,#0f0);"></div>
<svg width="705" height="408"><path d="M601 79.39999999999999 l2.7 4.2 h-5.4z" fill="#b8b8b8" stroke="#3a3a3a" stroke-width="0.4"/></svg>
<div class="a" style="left:667px;top:74.1px;width:20.8px;height:11px;background:#424242;border:0.6px solid #303030;box-sizing:border-box;"></div>
<div class="t" style="left:669px;top:77.0px;font-size:6.2px;color:#ececec;">0</div>
<div class="t" style="left:591.6px;top:90.4px;font-size:6.6px;color:#ececec;">B</div>
<div class="a" style="left:600.2px;top:89.5px;width:64px;height:3.2px;background:#2c2c2c;"></div>
<div class="a" style="left:600.7px;top:90.0px;width:63px;height:2.2px;background:linear-gradient(90deg,#000,#00f);"></div>
<svg width="705" height="408"><path d="M601 93.6 l2.7 4.2 h-5.4z" fill="#b8b8b8" stroke="#3a3a3a" stroke-width="0.4"/></svg>
<div class="a" style="left:667px;top:88.3px;width:20.8px;height:11px;background:#424242;border:0.6px solid #303030;box-sizing:border-box;"></div>
<div class="t" style="left:669px;top:91.2px;font-size:6.2px;color:#ececec;">0</div>
<div class="a" style="left:570.2px;top:105px;width:118px;height:8.4px;background:linear-gradient(180deg,rgba(255,255,255,0.6),rgba(255,255,255,0) 40%,rgba(0,0,0,0) 45%,rgba(0,0,0,0.85)),linear-gradient(90deg,#f00,#ff0 17%,#0f0 33%,#0ff 50%,#00f 67%,#f0f 83%,#f00);"></div>
<div class="a" style="left:688.2px;top:105px;width:3.8px;height:4.2px;background:#fff;"></div>
<div class="a" style="left:688.2px;top:109.2px;width:3.8px;height:4.2px;background:#000;"></div>
<div class="a" style="left:567.4px;top:115.6px;width:137.6px;height:2.9px;background:#303030;"></div>
<div class="a" style="left:567.4px;top:118.5px;width:137.6px;height:9.4px;background:#3a3a3a;"></div>
<div class="a" style="left:567.4px;top:118.5px;width:20.4px;height:9.6px;background:#535353;"></div>
<div class="t" style="left:571.8px;top:120.7px;font-size:6.2px;color:#f0f0f0;">调整</div>
<div class="a" style="left:588.4px;top:119.0px;width:20.599999999999998px;height:8.9px;background:#424242;"></div>
<div class="t" style="left:592.4px;top:120.7px;font-size:6.2px;color:#a8a8a8;">样式</div>
<div class="a" style="left:567.4px;top:127.9px;width:137.6px;height:60.6px;background:#535353;"></div>
<svg width="705" height="408"><path d="M693.2 122.1 h2.6 l-1.3 1.6z" fill="#d0d0d0"/><path d="M696.4 121.7 h3.6 M696.4 123.3 h3.6 M696.4 124.9 h3.6" stroke="#d0d0d0" stroke-width="0.7"/></svg>
<div class="t" style="left:573px;top:132.9px;font-size:6.6px;color:#f0f0f0;">添加调整</div>
<svg width="705" height="408" fill="none"><circle cx="599" cy="149.79999999999998" r="2.1" fill="#cecece"/><path d="M602.20 149.80 L603.80 149.80" stroke="#cecece" stroke-width="0.8"/><path d="M601.26 152.06 L602.39 153.19" stroke="#cecece" stroke-width="0.8"/><path d="M599.00 153.00 L599.00 154.60" stroke="#cecece" stroke-width="0.8"/><path d="M596.74 152.06 L595.61 153.19" stroke="#cecece" stroke-width="0.8"/><path d="M595.80 149.80 L594.20 149.80" stroke="#cecece" stroke-width="0.8"/><path d="M596.74 147.54 L595.61 146.41" stroke="#cecece" stroke-width="0.8"/><path d="M599.00 146.60 L599.00 145.00" stroke="#cecece" stroke-width="0.8"/><path d="M601.26 147.54 L602.39 146.41" stroke="#cecece" stroke-width="0.8"/><path d="M608 153.79999999999998 h10 v-2.4 l-1.2 -1 l-1 -3.4 l-1 3 l-1 -4.4 l-1.2 4.6 l-1 -2.4 l-1.2 2.6 l-1.4 1z" fill="#cecece"/><rect x="622.2" y="145.79999999999998" width="8.6" height="8.2" fill="#cecece"/><path d="M622.6 153.6 l8 -7.4 M625 146.0 v8 M628 146.0 v8 M622.4 148.6 h8.4 M622.4 151.2 h8.4" stroke="#4a4a4a" stroke-width="0.6"/><rect x="635.2" y="145.79999999999998" width="8.8" height="8.2" fill="#cecece"/><path d="M635.6 153.6 L643.6 146.2 V153.6z" fill="#3a3a3a"/><path d="M649 146.0 h9 l-4.5 8.2z" fill="#cecece"/><path d="M651.2 147.6 h4.6 l-2.3 4.2z" fill="#444"/><rect x="588.2" y="161.4" width="8.8" height="8" fill="#cecece"/><rect x="589" y="165" width="3" height="3.6" fill="#555"/><rect x="592.4" y="165" width="4" height="1.4" fill="#777"/><path d="M606 161.6 v7 M602.4 169.2 h7.2 M602 163 h8" stroke="#cecece" stroke-width="0.9"/><path d="M600.8 166.6 h3.6 l-1.8 -3.4z M607.6 166.6 h3.6 l-1.8 -3.4z" fill="#cecece"/><rect x="615.2" y="161.6" width="8.6" height="7.8" stroke="#cecece" stroke-width="0.9" fill="#444"/><rect x="619.5" y="161.6" width="4.3" height="7.8" fill="#cecece"/><rect x="628.4" y="161.4" width="6" height="5" fill="#cecece"/><circle cx="634.4" cy="166.4" r="3.2" fill="#cecece" stroke="#4a4a4a" stroke-width="0.6"/><circle cx="634.4" cy="166.4" r="1.6" fill="#666"/><circle cx="646.6" cy="163.8" r="2.5" fill="#cecece"/><circle cx="644.4" cy="167" r="2.5" fill="#cecece"/><circle cx="648.8" cy="167" r="2.5" fill="#cecece"/><circle cx="646.6" cy="165.8" r="1" fill="#555"/><rect x="655.2" y="161.6" width="9" height="7.8" fill="#cecece"/><path d="M658.2 161.6 v7.8 M661.2 161.6 v7.8 M655.2 164.2 h9 M655.2 166.8 h9" stroke="#555" stroke-width="0.6"/><defs><linearGradient id="ag" x1="0" x2="1"><stop offset="0" stop-color="#e8e8e8"/><stop offset="1" stop-color="#555"/></linearGradient><linearGradient id="ag2" x1="0" y1="0" x2="1" y2="1"><stop offset="0" stop-color="#555"/><stop offset="0.5" stop-color="#e8e8e8"/><stop offset="1" stop-color="#555"/></linearGradient></defs><rect x="594.4" y="176.6" width="9" height="7" stroke="#cecece" stroke-width="0.9" fill="#3c3c3c"/><path d="M596 183 q1 -5 6 -5.4 q-1 5 -6 5.4z" fill="#cecece"/><rect x="608.4" y="176.6" width="9" height="7" stroke="#cecece" stroke-width="0.9" fill="url(#ag2)"/><rect x="622" y="176.6" width="9" height="7" stroke="#cecece" stroke-width="0.9" fill="#3c3c3c"/><path d="M622.4 182.4 l8.2 -4.4 v2 l-8.2 4.4z" fill="#cecece"/><rect x="635.4" y="176.6" width="9" height="7" stroke="#cecece" stroke-width="0.9" fill="#3c3c3c"/><path d="M635.8 177 l4 3.4 l-4 3.4z M644 177 l-4 3.4 l4 3.4z" fill="#cecece"/><rect x="648.6" y="176.6" width="9" height="7" stroke="#cecece" stroke-width="0.9" fill="url(#ag)"/></svg>
<div class="a" style="left:567.4px;top:188.5px;width:137.6px;height:4px;background:#303030;"></div>
<div class="a" style="left:567.4px;top:192.5px;width:137.6px;height:9.4px;background:#3a3a3a;"></div>
<div class="a" style="left:567.4px;top:192.5px;width:20.2px;height:9.6px;background:#535353;"></div>
<div class="t" style="left:571.8px;top:194.7px;font-size:6.2px;color:#f0f0f0;">图层</div>
<div class="a" style="left:588.2px;top:193.0px;width:21.2px;height:8.9px;background:#424242;"></div>
<div class="t" style="left:592.2px;top:194.7px;font-size:6.2px;color:#a8a8a8;">通道</div>
<div class="a" style="left:610.0px;top:193.0px;width:20.599999999999998px;height:8.9px;background:#424242;"></div>
<div class="t" style="left:614.0px;top:194.7px;font-size:6.2px;color:#a8a8a8;">路径</div>
<div class="a" style="left:567.4px;top:201.9px;width:137.6px;height:203.9px;background:#535353;"></div>
<svg width="705" height="408"><path d="M693.2 196.1 h2.6 l-1.3 1.6z" fill="#d0d0d0"/><path d="M696.4 195.7 h3.6 M696.4 197.3 h3.6 M696.4 198.9 h3.6" stroke="#d0d0d0" stroke-width="0.7"/></svg>
<div class="a" style="left:570.4px;top:203.8px;width:38.8px;height:11px;background:linear-gradient(#6a6a6a,#5a5a5a);border:0.5px solid #3c3c3c;box-sizing:border-box;border-radius:1.5px;"></div>
<svg width="705" height="408" fill="none"><circle cx="577.6" cy="208.8" r="1.9" stroke="#ececec" stroke-width="0.8"/><path d="M576.2 210.4 l-1.6 1.8" stroke="#ececec" stroke-width="0.9"/><path d="M603.6 208.6 l1.3 -1.7 l1.3 1.7z M603.6 210.4 l1.3 1.7 l1.3 -1.7z" fill="#e8e8e8"/></svg>
<div class="t" style="left:582.2px;top:206.8px;font-size:6.6px;color:#f0f0f0;">类型</div>
<svg width="705" height="408" fill="none"><rect x="621.6" y="206.8" width="7" height="5.8" stroke="#cecece" stroke-width="0.8"/><path d="M622.4 211.6 l2 -2.4 l1.4 1.4 l1 -0.8 l1.2 1.8z" fill="#cecece"/><circle cx="638.2" cy="209.4" r="3" stroke="#cecece" stroke-width="0.9"/><path d="M638.2 206.4 a3 3 0 0 0 0 6z" fill="#cecece"/><rect x="661.6" y="206.4" width="6.6" height="6" stroke="#cecece" stroke-width="0.9"/><rect x="660.6" y="205.4" width="2" height="2" fill="#cecece"/><rect x="667.2" y="205.4" width="2" height="2" fill="#cecece"/><rect x="660.6" y="211.4" width="2" height="2" fill="#cecece"/><rect x="667.2" y="211.4" width="2" height="2" fill="#cecece"/><path d="M675.2 206 h4 l1.6 1.6 v5.4 h-5.6z" fill="#cecece"/><rect x="678.4" y="209.6" width="3.8" height="3.4" fill="#cecece" stroke="#535353" stroke-width="0.5"/><rect x="695" y="204.6" width="4.6" height="9.6" rx="1" fill="#3a3a3a" stroke="#2a2a2a" stroke-width="0.5"/><rect x="695.6" y="205.2" width="3.4" height="3.6" fill="#bdbdbd"/></svg>
<div class="t" style="left:648.2px;top:205.8px;font-size:9px;color:#cecece;font-family:'Liberation Serif',serif;">T</div>
<div class="a" style="left:570.4px;top:219.6px;width:60.8px;height:11.2px;background:linear-gradient(#6a6a6a,#5a5a5a);border:0.5px solid #3c3c3c;box-sizing:border-box;border-radius:1.5px;"></div>
<div class="t" style="left:574px;top:222.6px;font-size:6.6px;color:#f0f0f0;">正常</div>
<svg width="705" height="408"><path d="M626 224.4 l1.3 -1.7 l1.3 1.7z M626 226.2 l1.3 1.7 l1.3 -1.7z" fill="#e8e8e8"/></svg>
<div class="t" style="left:636.2px;top:222.6px;font-size:6.6px;color:#ececec;letter-spacing:0.25px;">不透明度:</div>
<div class="a" style="left:668.8px;top:219.8px;width:20.4px;height:11px;background:#3a3a3a;border:0.6px solid #2a2a2a;box-sizing:border-box;"></div>
<div class="t" style="left:670.6px;top:222.6px;font-size:6.9px;color:#ececec;">100%</div>
<div class="a" style="left:689.8px;top:219.8px;width:9.8px;height:11px;background:#606060;border:0.5px solid #484848;box-sizing:border-box;border-radius:1px;"></div>
<svg width="705" height="408"><path d="M693 224.60000000000002 h3.4 l-1.7 2z" fill="#e8e8e8"/></svg>
<div class="t" style="left:571px;top:238.6px;font-size:6.6px;color:#ececec;">锁定:</div>
<svg width="705" height="408" fill="none"><rect x="592" y="238.4" width="6.4" height="6.4" fill="#cecece"/><rect x="593.2" y="239.6" width="2" height="2" fill="#555"/><rect x="595.2" y="241.6" width="2" height="2" fill="#555"/><path d="M612.6 237.4 l-4.4 5" stroke="#cecece" stroke-width="1.2"/><path d="M608.2 241.8 q-0.2 2.6 -3.6 2.8 q1.8 -1 1.6 -3z" fill="#cecece"/><path d="M620.2 238 v7 M616.7 241.5 h7" stroke="#cecece" stroke-width="0.8"/><path d="M620.2 237.2 l1.3 1.5 h-2.6z M620.2 245.8 l1.3 -1.5 h-2.6z M615.9 241.5 l1.5 -1.3 v2.6z M624.5 241.5 l-1.5 -1.3 v2.6z" fill="#cecece"/><rect x="629.2" y="240.6" width="6.2" height="4.6" fill="#cecece"/><path d="M630.6 240.6 v-1.4 a1.7 1.7 0 0 1 3.4 0 v1.4" stroke="#cecece" stroke-width="0.9"/></svg>
<div class="t" style="left:650.4px;top:238.6px;font-size:6.6px;color:#ececec;">填充:</div>
<div class="a" style="left:668.8px;top:235.8px;width:20.4px;height:11px;background:#3a3a3a;border:0.6px solid #2a2a2a;box-sizing:border-box;"></div>
<div class="t" style="left:670.6px;top:238.6px;font-size:6.9px;color:#ececec;">100%</div>
<div class="a" style="left:689.8px;top:235.8px;width:9.8px;height:11px;background:#606060;border:0.5px solid #484848;box-sizing:border-box;border-radius:1px;"></div>
<svg width="705" height="408"><path d="M693 240.60000000000002 h3.4 l-1.7 2z" fill="#e8e8e8"/></svg>
<div class="a" style="left:567.4px;top:249.8px;width:137.6px;height:0.7px;background:#383838;"></div>
<div class="a" style="left:567.4px;top:250.4px;width:126px;height:144.99999999999997px;overflow:hidden;">
<div class="a" style="left:0;top:0.0px;width:126px;height:21.9px;background:#667a99;border-bottom:0.7px solid #3c3c3c;box-sizing:border-box;"></div>
<div class="a" style="left:0;top:0.0px;width:17.6px;height:21.2px;background:#535353;border-right:0.7px solid #3c3c3c;box-sizing:border-box;"></div>
<svg width="126" height="160" fill="none"><path d="M5.6 10.8 q3.4 -3.6 6.8 0 q-3.4 3.2 -6.8 0z" fill="#e0e0e0"/><circle cx="9" cy="10.6" r="1.3" fill="#444"/></svg>
<div class="a" style="left:19.8px;top:1.4px;width:14px;height:18.6px;box-sizing:border-box;border:0.7px solid #e8e8e8;background-color:#fff;background-image:linear-gradient(45deg,#bdbdbd 25%,transparent 25%,transparent 75%,#bdbdbd 75%),linear-gradient(45deg,#bdbdbd 25%,transparent 25%,transparent 75%,#bdbdbd 75%);background-size:4.6px 4.6px;background-position:0 0,2.3px 2.3px;"></div>
<div class="a" style="left:18.6px;top:0.3px;width:16.4px;height:20.8px;box-sizing:border-box;border:0.6px solid #222;"></div>
<svg width="126" height="160" fill="none"><path d="M29.5 18.7 q1.6 -3.84 3.2 -3.2 M30.5 18.7 q1.6 -1.2800000000000002 2.2 -1.2800000000000002" stroke="#2a9be0" stroke-width="1.1"/></svg>
<div class="t" style="left:38.4px;top:8.2px;font-size:6.7px;color:#f0f0f0;">图层 7</div>
<div class="a" style="left:0;top:21.9px;width:126px;height:21.9px;background:#535353;border-bottom:0.7px solid #3c3c3c;box-sizing:border-box;"></div>
<div class="a" style="left:0;top:21.9px;width:17.6px;height:21.2px;background:#535353;border-right:0.7px solid #3c3c3c;box-sizing:border-box;"></div>
<svg width="126" height="160" fill="none"><path d="M5.6 32.7 q3.4 -3.6 6.8 0 q-3.4 3.2 -6.8 0z" fill="#e0e0e0"/><circle cx="9" cy="32.5" r="1.3" fill="#444"/></svg>
<div class="a" style="left:19.8px;top:23.299999999999997px;width:14px;height:18.6px;box-sizing:border-box;border:0.7px solid #2c2c2c;background-color:#fff;background-image:linear-gradient(45deg,#bdbdbd 25%,transparent 25%,transparent 75%,#bdbdbd 75%),linear-gradient(45deg,#bdbdbd 25%,transparent 25%,transparent 75%,#bdbdbd 75%);background-size:4.6px 4.6px;background-position:0 0,2.3px 2.3px;"></div>
<svg width="126" height="160" fill="none"><path d="M23.5 37.4 q3.5 -6.0 7 -5 M24.5 37.4 q3.5 -2.0 6 -2.0" stroke="#2a9be0" stroke-width="1.1"/></svg>
<div class="t" style="left:38.4px;top:30.099999999999998px;font-size:6.7px;color:#f0f0f0;">椭圆 1 拷贝 5</div>
<div class="a" style="left:0;top:43.8px;width:126px;height:21.9px;background:#535353;border-bottom:0.7px solid #3c3c3c;box-sizing:border-box;"></div>
<div class="a" style="left:0;top:43.8px;width:17.6px;height:21.2px;background:#535353;border-right:0.7px solid #3c3c3c;box-sizing:border-box;"></div>
<svg width="126" height="160" fill="none"><path d="M5.6 54.599999999999994 q3.4 -3.6 6.8 0 q-3.4 3.2 -6.8 0z" fill="#e0e0e0"/><circle cx="9" cy="54.4" r="1.3" fill="#444"/></svg>
<div class="a" style="left:19.8px;top:45.199999999999996px;width:14px;height:18.6px;box-sizing:border-box;border:0.7px solid #2c2c2c;background-color:#fff;background-image:linear-gradient(45deg,#bdbdbd 25%,transparent 25%,transparent 75%,#bdbdbd 75%),linear-gradient(45deg,#bdbdbd 25%,transparent 25%,transparent 75%,#bdbdbd 75%);background-size:4.6px 4.6px;background-position:0 0,2.3px 2.3px;"></div>
<svg width="126" height="160" fill="none"><path d="M21 49.199999999999996 q1.5 -3.5999999999999996 3 -3 M22 49.199999999999996 q1.5 -1.2000000000000002 2 -1.2000000000000002" stroke="#2a9be0" stroke-width="1.1"/></svg>
<div class="t" style="left:38.4px;top:52.0px;font-size:6.7px;color:#f0f0f0;">图层 6</div>
<div class="a" style="left:0;top:65.69999999999999px;width:126px;height:21.9px;background:#535353;border-bottom:0.7px solid #3c3c3c;box-sizing:border-box;"></div>
<div class="a" style="left:0;top:65.69999999999999px;width:17.6px;height:21.2px;background:#535353;border-right:0.7px solid #3c3c3c;box-sizing:border-box;"></div>
<svg width="126" height="160" fill="none"><path d="M5.6 76.49999999999999 q3.4 -3.6 6.8 0 q-3.4 3.2 -6.8 0z" fill="#e0e0e0"/><circle cx="9" cy="76.29999999999998" r="1.3" fill="#444"/></svg>
<div class="a" style="left:19.8px;top:67.1px;width:14px;height:18.6px;box-sizing:border-box;border:0.7px solid #2c2c2c;background-color:#fff;background-image:linear-gradient(45deg,#bdbdbd 25%,transparent 25%,transparent 75%,#bdbdbd 75%),linear-gradient(45deg,#bdbdbd 25%,transparent 25%,transparent 75%,#bdbdbd 75%);background-size:4.6px 4.6px;background-position:0 0,2.3px 2.3px;"></div>
<svg width="126" height="160" fill="none"><path d="M23.5 73.69999999999999 q3.5 -5.3999999999999995 7 -4.5 M24.5 73.69999999999999 q3.5 -1.8 6 -1.8" stroke="#2a9be0" stroke-width="1.1"/></svg>
<div class="t" style="left:38.4px;top:73.89999999999999px;font-size:6.7px;color:#f0f0f0;">椭圆 1 拷贝 4</div>
<div class="a" style="left:0;top:87.6px;width:126px;height:21.9px;background:#535353;border-bottom:0.7px solid #3c3c3c;box-sizing:border-box;"></div>
<div class="a" style="left:0;top:87.6px;width:17.6px;height:21.2px;background:#535353;border-right:0.7px solid #3c3c3c;box-sizing:border-box;"></div>
<svg width="126" height="160" fill="none"><path d="M5.6 98.39999999999999 q3.4 -3.6 6.8 0 q-3.4 3.2 -6.8 0z" fill="#e0e0e0"/><circle cx="9" cy="98.19999999999999" r="1.3" fill="#444"/></svg>
<div class="a" style="left:19.8px;top:89.0px;width:14px;height:18.6px;box-sizing:border-box;border:0.7px solid #2c2c2c;background-color:#fff;background-image:linear-gradient(45deg,#bdbdbd 25%,transparent 25%,transparent 75%,#bdbdbd 75%),linear-gradient(45deg,#bdbdbd 25%,transparent 25%,transparent 75%,#bdbdbd 75%);background-size:4.6px 4.6px;background-position:0 0,2.3px 2.3px;"></div>
<div class="a" style="left:23.4px;top:100.6px;width:1.4px;height:1.4px;background:#456;"></div>
<div class="t" style="left:38.4px;top:95.8px;font-size:6.7px;color:#f0f0f0;">图层 5</div>
<div class="a" style="left:0;top:109.5px;width:126px;height:21.9px;background:#535353;border-bottom:0.7px solid #3c3c3c;box-sizing:border-box;"></div>
<div class="a" style="left:0;top:109.5px;width:17.6px;height:21.2px;background:#535353;border-right:0.7px solid #3c3c3c;box-sizing:border-box;"></div>
<svg width="126" height="160" fill="none"><path d="M5.6 120.3 q3.4 -3.6 6.8 0 q-3.4 3.2 -6.8 0z" fill="#e0e0e0"/><circle cx="9" cy="120.1" r="1.3" fill="#444"/></svg>
<div class="a" style="left:19.8px;top:110.9px;width:14px;height:18.6px;box-sizing:border-box;border:0.7px solid #2c2c2c;background-color:#fff;background-image:linear-gradient(45deg,#bdbdbd 25%,transparent 25%,transparent 75%,#bdbdbd 75%),linear-gradient(45deg,#bdbdbd 25%,transparent 25%,transparent 75%,#bdbdbd 75%);background-size:4.6px 4.6px;background-position:0 0,2.3px 2.3px;"></div>
<div class="t" style="left:38.4px;top:117.7px;font-size:6.7px;color:#f0f0f0;">图层 4</div>
<div class="a" style="left:0;top:131.39999999999998px;width:126px;height:21.9px;background:#535353;border-bottom:0.7px solid #3c3c3c;box-sizing:border-box;"></div>
<div class="a" style="left:0;top:131.39999999999998px;width:17.6px;height:21.2px;background:#535353;border-right:0.7px solid #3c3c3c;box-sizing:border-box;"></div>
<svg width="126" height="160" fill="none"><path d="M5.6 142.2 q3.4 -3.6 6.8 0 q-3.4 3.2 -6.8 0z" fill="#e0e0e0"/><circle cx="9" cy="141.99999999999997" r="1.3" fill="#444"/></svg>
<div class="a" style="left:19.8px;top:132.79999999999998px;width:14px;height:18.6px;box-sizing:border-box;border:0.7px solid #2c2c2c;background-color:#fff;background-image:linear-gradient(45deg,#bdbdbd 25%,transparent 25%,transparent 75%,#bdbdbd 75%),linear-gradient(45deg,#bdbdbd 25%,transparent 25%,transparent 75%,#bdbdbd 75%);background-size:4.6px 4.6px;background-position:0 0,2.3px 2.3px;"></div>
<div class="t" style="left:38.4px;top:139.59999999999997px;font-size:6.7px;color:#f0f0f0;">图层 3</div>
</div>
<div class="a" style="left:693.4px;top:250.4px;width:11.6px;height:144.99999999999997px;background:#4a4a4a;border-left:0.7px solid #383838;box-sizing:border-box;"></div>
<div class="a" style="left:695px;top:259.6px;width:6.4px;height:80.8px;background:#727272;border-radius:1.5px;"></div>
<svg width="705" height="408"><path d="M696.6 255.6 l1.7 -2 l1.7 2z M696.6 389.6 l1.7 2 l1.7 -2z" fill="#d8d8d8"/></svg>
<div class="a" style="left:567.4px;top:395.4px;width:137.6px;height:10.2px;background:#535353;border-top:0.7px solid #3a3a3a;box-sizing:border-box;"></div>
<svg width="705" height="408" fill="none"><rect x="588" y="399.4" width="4.4" height="2.8" rx="1.4" stroke="#9a9a9a" stroke-width="0.8"/><rect x="591.6" y="399.4" width="4.4" height="2.8" rx="1.4" stroke="#9a9a9a" stroke-width="0.8"/><rect x="619.6" y="398" width="7.6" height="6" fill="#cecece"/><circle cx="623.4" cy="401" r="1.7" fill="#444"/><circle cx="638" cy="401" r="3" stroke="#cecece" stroke-width="0.9"/><path d="M638 398 a3 3 0 0 0 0 6z" fill="#cecece"/><path d="M649 398.2 h2.6 l0.8 1 h3.2 v4.8 h-6.6z" fill="#cecece"/><path d="M664 398 h6.6 v4 l-2 2 h-4.6z" fill="#cecece"/><path d="M668.6 404 v-2 h2" stroke="#555" stroke-width="0.5"/><path d="M679.6 399.4 h6.4 M681.8 399.2 v-0.9 h2 v0.9" stroke="#cecece" stroke-width="0.8"/><path d="M680.2 400.2 h5.2 l-0.5 4 h-4.2z" fill="#cecece"/></svg>
<div class="t" style="left:604px;top:397.8px;font-size:7px;color:#cecece;font-style:italic;font-family:'Liberation Serif',serif;">fx</div>
<div class="a" style="left:611.6px;top:403px;width:1px;height:1px;background:#cecece;"></div>
<svg width="705" height="408" fill="none"><ellipse cx="592.6" cy="373" rx="10.6" ry="9" fill="#f4f4f4"/><path d="M586 380 l-2.4 4.4 l6 -2.6z" fill="#f4f4f4"/><ellipse cx="600.4" cy="379.6" rx="8.4" ry="7.2" fill="#f4f4f4" stroke="#535353" stroke-width="0.9"/><path d="M605 385.6 l2.4 3 l-5.4 -1.6z" fill="#f4f4f4"/><circle cx="589" cy="370.4" r="1.2" fill="#535353"/><circle cx="596" cy="370.4" r="1.2" fill="#535353"/><circle cx="597.6" cy="377.6" r="1" fill="#535353"/><circle cx="603.2" cy="377.6" r="1" fill="#535353"/></svg>
<div class="t" style="left:613.2px;top:369.6px;font-size:17.1px;color:#fafafa;letter-spacing:0px;">极微设计</div>
</body></html>
